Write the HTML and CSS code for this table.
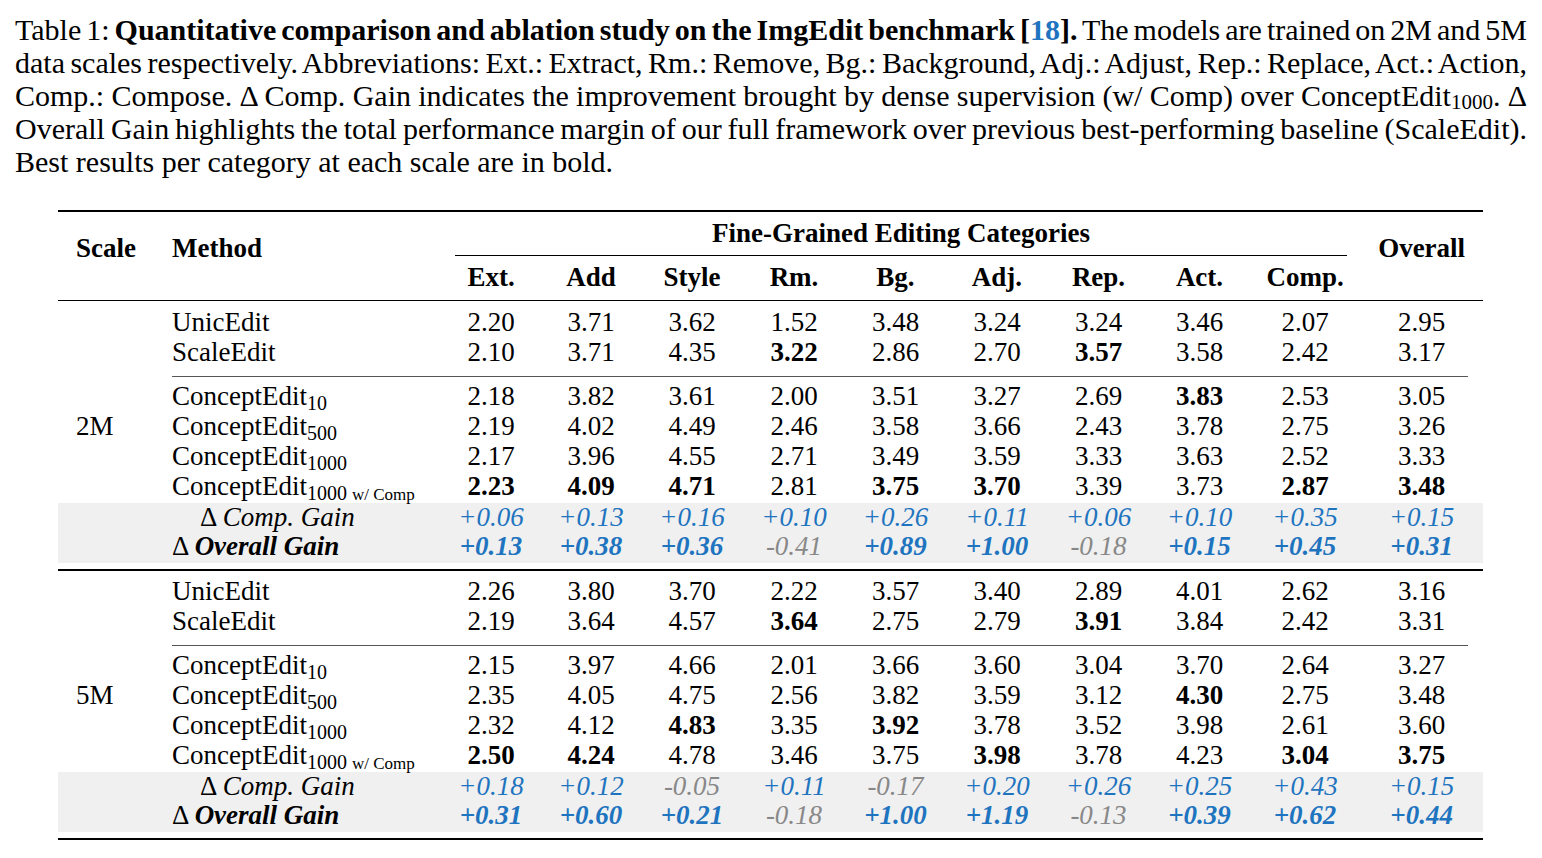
FILE: index.html
```html
<!DOCTYPE html>
<html lang="en">
<head>
    <meta charset="UTF-8">
    <meta name="viewport" content="width=device-width, initial-scale=1.0">
    <title>Table 1: ImgEdit benchmark</title>
    <link rel="stylesheet" href="styles.css">
</head>
<body>
    <div class="caption">
        <span class="line">Table 1: <b>Quantitative comparison and ablation study on the ImgEdit benchmark [<span class="cite">18</span>].</b> The models are trained on 2M and 5M</span>
        <span class="line">data scales respectively. Abbreviations: Ext.: Extract, Rm.: Remove, Bg.: Background, Adj.: Adjust, Rep.: Replace, Act.: Action,</span>
        <span class="line">Comp.: Compose. &Delta; Comp. Gain indicates the improvement brought by dense supervision (w/ Comp) over ConceptEdit<sub>1000</sub>. &Delta;</span>
        <span class="line">Overall Gain highlights the total performance margin of our full framework over previous best-performing baseline (ScaleEdit).</span>
        <span class="line last">Best results per category at each scale are in bold.</span>
    </div>

    <table class="results">
        <colgroup>
            <col class="c-scale">
            <col class="c-method">
            <col style="width:100px"><col style="width:100px"><col style="width:102px">
            <col style="width:102px"><col style="width:101px"><col style="width:102px">
            <col style="width:101px"><col style="width:101px"><col style="width:110px">
            <col class="c-overall">
        </colgroup>
        <thead>
            <tr class="head-top">
                <th rowspan="2" class="scale">Scale</th>
                <th rowspan="2" class="method">Method</th>
                <th colspan="9" class="group"><div class="group-label">Fine-Grained Editing Categories</div></th>
                <th rowspan="2">Overall</th>
            </tr>
            <tr class="head-sub">
                <th>Ext.</th><th>Add</th><th>Style</th><th>Rm.</th><th>Bg.</th>
                <th>Adj.</th><th>Rep.</th><th>Act.</th><th>Comp.</th>
            </tr>
        </thead>

        <tbody>
            <tr class="first">
                <td></td><td class="method">UnicEdit</td>
                <td>2.20</td><td>3.71</td><td>3.62</td><td>1.52</td><td>3.48</td><td>3.24</td><td>3.24</td><td>3.46</td><td>2.07</td><td>2.95</td>
            </tr>
            <tr class="before-rule">
                <td></td><td class="method">ScaleEdit</td>
                <td>2.10</td><td>3.71</td><td>4.35</td><td><b>3.22</b></td><td>2.86</td><td>2.70</td><td><b>3.57</b></td><td>3.58</td><td>2.42</td><td>3.17</td>
            </tr>
            <tr class="rule-row">
                <td></td><td colspan="11"><div class="cmid"></div></td>
            </tr>
            <tr class="after-rule">
                <td></td><td class="method">ConceptEdit<sub>10</sub></td>
                <td>2.18</td><td>3.82</td><td>3.61</td><td>2.00</td><td>3.51</td><td>3.27</td><td>2.69</td><td><b>3.83</b></td><td>2.53</td><td>3.05</td>
            </tr>
            <tr>
                <td class="scale">2M</td><td class="method">ConceptEdit<sub>500</sub></td>
                <td>2.19</td><td>4.02</td><td>4.49</td><td>2.46</td><td>3.58</td><td>3.66</td><td>2.43</td><td>3.78</td><td>2.75</td><td>3.26</td>
            </tr>
            <tr>
                <td></td><td class="method">ConceptEdit<sub>1000</sub></td>
                <td>2.17</td><td>3.96</td><td>4.55</td><td>2.71</td><td>3.49</td><td>3.59</td><td>3.33</td><td>3.63</td><td>2.52</td><td>3.33</td>
            </tr>
            <tr class="with-comp">
                <td></td><td class="method">ConceptEdit<sub>1000 <span class="tag">w/ Comp</span></sub></td>
                <td><b>2.23</b></td><td><b>4.09</b></td><td><b>4.71</b></td><td>2.81</td><td><b>3.75</b></td><td><b>3.70</b></td><td>3.39</td><td>3.73</td><td><b>2.87</b></td><td><b>3.48</b></td>
            </tr>
            <tr class="gain">
                <td></td><td class="method comp-gain">&Delta; <i>Comp. Gain</i></td>
                <td>+0.06</td><td>+0.13</td><td>+0.16</td><td>+0.10</td><td>+0.26</td><td>+0.11</td><td>+0.06</td><td>+0.10</td><td>+0.35</td><td>+0.15</td>
            </tr>
            <tr class="gain overall-gain last-gain">
                <td></td><td class="method">&Delta; <i><b>Overall Gain</b></i></td>
                <td>+0.13</td><td>+0.38</td><td>+0.36</td><td class="neg">-0.41</td><td>+0.89</td><td>+1.00</td><td class="neg">-0.18</td><td>+0.15</td><td>+0.45</td><td>+0.31</td>
            </tr>
            <tr class="gap"><td colspan="12"></td></tr>
        </tbody>

        <tbody class="second">
            <tr class="first">
                <td></td><td class="method">UnicEdit</td>
                <td>2.26</td><td>3.80</td><td>3.70</td><td>2.22</td><td>3.57</td><td>3.40</td><td>2.89</td><td>4.01</td><td>2.62</td><td>3.16</td>
            </tr>
            <tr class="before-rule">
                <td></td><td class="method">ScaleEdit</td>
                <td>2.19</td><td>3.64</td><td>4.57</td><td><b>3.64</b></td><td>2.75</td><td>2.79</td><td><b>3.91</b></td><td>3.84</td><td>2.42</td><td>3.31</td>
            </tr>
            <tr class="rule-row">
                <td></td><td colspan="11"><div class="cmid"></div></td>
            </tr>
            <tr class="after-rule">
                <td></td><td class="method">ConceptEdit<sub>10</sub></td>
                <td>2.15</td><td>3.97</td><td>4.66</td><td>2.01</td><td>3.66</td><td>3.60</td><td>3.04</td><td>3.70</td><td>2.64</td><td>3.27</td>
            </tr>
            <tr>
                <td class="scale">5M</td><td class="method">ConceptEdit<sub>500</sub></td>
                <td>2.35</td><td>4.05</td><td>4.75</td><td>2.56</td><td>3.82</td><td>3.59</td><td>3.12</td><td><b>4.30</b></td><td>2.75</td><td>3.48</td>
            </tr>
            <tr>
                <td></td><td class="method">ConceptEdit<sub>1000</sub></td>
                <td>2.32</td><td>4.12</td><td><b>4.83</b></td><td>3.35</td><td><b>3.92</b></td><td>3.78</td><td>3.52</td><td>3.98</td><td>2.61</td><td>3.60</td>
            </tr>
            <tr class="with-comp">
                <td></td><td class="method">ConceptEdit<sub>1000 <span class="tag">w/ Comp</span></sub></td>
                <td><b>2.50</b></td><td><b>4.24</b></td><td>4.78</td><td>3.46</td><td>3.75</td><td><b>3.98</b></td><td>3.78</td><td>4.23</td><td><b>3.04</b></td><td><b>3.75</b></td>
            </tr>
            <tr class="gain">
                <td></td><td class="method comp-gain">&Delta; <i>Comp. Gain</i></td>
                <td>+0.18</td><td>+0.12</td><td class="neg">-0.05</td><td>+0.11</td><td class="neg">-0.17</td><td>+0.20</td><td>+0.26</td><td>+0.25</td><td>+0.43</td><td>+0.15</td>
            </tr>
            <tr class="gain overall-gain last-gain">
                <td></td><td class="method">&Delta; <i><b>Overall Gain</b></i></td>
                <td>+0.31</td><td>+0.60</td><td>+0.21</td><td class="neg">-0.18</td><td>+1.00</td><td>+1.19</td><td class="neg">-0.13</td><td>+0.39</td><td>+0.62</td><td>+0.44</td>
            </tr>
            <tr class="gap end"><td colspan="12"></td></tr>
        </tbody>
    </table>
</body>
</html>
```

FILE: styles.css
```css
body {
    margin: 0;
    padding: 0;
    background-color: #fff;
    color: #000;
    font-family: "Liberation Serif", "Times New Roman", serif;
}

/* caption, justified line by line like the pdf */
.caption {
    width: 1512px;
    margin: 13px 0 0 15px;
    font-size: 30px;
    line-height: 33px;
    word-spacing: -3px;
}
.caption .line {
    display: block;
    text-align: justify;
    text-align-last: justify;
    white-space: nowrap;
}
.caption .line.last {
    text-align-last: left;
    word-spacing: 0;
}
.caption sub {
    font-size: 21px;
    line-height: 0;
    vertical-align: -3px;
}
.cite {
    color: #1f74bf;
}

/* table */
.results {
    width: 1425px;
    margin: 32px 0 0 58px;
    border-collapse: collapse;
    table-layout: fixed;
    font-size: 27px;
    line-height: 30px;
}
.c-scale {
    width: 114px;
}
.c-method {
    width: 269px;
}
.c-overall {
    width: 123px;
}
.results th,
.results td {
    padding: 0;
    text-align: center;
    white-space: nowrap;
}
.results .scale {
    text-align: left;
    padding-left: 18px;
}
.results .method {
    text-align: left;
}

/* header */
.head-top th {
    border-top: 2px solid #000;
    padding-top: 6px;
}
.head-top th[rowspan] {
    padding-top: 0;
    padding-bottom: 16px;
}
.group-label {
    margin: 0 13px 0 14px;
    padding-bottom: 7px;
    border-bottom: 1px solid #000;
}
.head-sub th {
    padding: 6px 0 8px;
}
thead tr th {
    border-bottom: 1px solid #000;
}
.head-top th.group {
    border-bottom: none;
}

/* body rows */
tr.first td {
    padding-top: 6px;
}
tbody.second tr.first td {
    padding-top: 5px;
}
tr.before-rule td {
    padding-bottom: 9px;
}
tr.after-rule td {
    padding-top: 4px;
}
.rule-row td {
    padding: 0;
    line-height: 0;
}
.cmid {
    margin-right: 15px;
    border-top: 1px solid #555;
}
.results sub {
    font-size: 20px;
    line-height: 0;
    vertical-align: -5px;
}
.results sub .tag {
    font-size: 17px;
}
tr.with-comp td {
    padding-bottom: 2px;
}

/* gain rows */
tr.gain td {
    background-color: #f0f0f0;
    color: #1f74bf;
    font-style: italic;
    line-height: 29px;
}
tr.gain td.method {
    color: #000;
    font-style: normal;
}
tr.gain td.comp-gain {
    padding-left: 28px;
}
tr.overall-gain td {
    font-weight: bold;
}
tr.overall-gain td.method {
    font-weight: normal;
}
tr.gain td.neg {
    color: #888;
    font-weight: normal;
}
tr.last-gain td {
    padding-bottom: 2px;
}
tr.gap td {
    height: 6px;
    line-height: 0;
}
tr.gap.end td {
    border-bottom: 2px solid #000;
}
tbody.second {
    border-top: 2px solid #000;
}
```
